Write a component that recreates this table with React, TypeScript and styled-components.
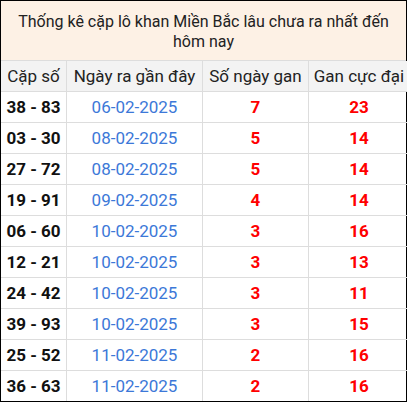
import React from "react";
import styled, { createGlobalStyle } from "styled-components";

const Global = createGlobalStyle`
  html, body { margin: 0; padding: 0; background: #fff; }
  body { font-family: Roboto, "Noto Sans", Arial, sans-serif; }
`;

const Wrap = styled.div`
  width: 407px;
  box-sizing: border-box;
  border: 1px solid #000;
  background: #fff;
`;

const Title = styled.div`
  background: #fdf1e5;
  color: #222;
  font-size: 16px;
  line-height: 20px;
  text-align: center;
  padding: 11px 10px 9px;
  border-bottom: 1px solid #ddd;
  height: 60px;
  box-sizing: border-box;
`;

const Table = styled.table`
  width: 100%;
  border-collapse: collapse;
  table-layout: fixed;
`;

const Th = styled.th<{ $w: number }>`
  width: ${(p) => p.$w}px;
  height: 30px;
  padding: 0;
  background: #f3f3f3;
  color: #222;
  font-weight: 400;
  font-size: 17px;
  text-align: center;
  border: 1px solid #ddd;
  border-top: none;
  &:first-child { border-left: none; }
  &:last-child { border-right: none; }
`;

type Kind = "pair" | "date" | "num";

const Td = styled.td<{ $kind: Kind }>`
  height: 30px;
  padding: 0;
  text-align: center;
  font-size: 17px;
  border: 1px solid #ddd;
  &:first-child { border-left: none; }
  &:last-child { border-right: none; }
  font-weight: ${(p) => (p.$kind === "date" ? 400 : 700)};
  color: ${(p) =>
    p.$kind === "pair" ? "#111" : p.$kind === "date" ? "#3c78d8" : "#f00"};
`;

const Tr = styled.tr`
  &:last-child td { border-bottom: none; }
`;

const rows: [string, string, string, string][] = [
  ["38 - 83", "06-02-2025", "7", "23"],
  ["03 - 30", "08-02-2025", "5", "14"],
  ["27 - 72", "08-02-2025", "5", "14"],
  ["19 - 91", "09-02-2025", "4", "14"],
  ["06 - 60", "10-02-2025", "3", "16"],
  ["12 - 21", "10-02-2025", "3", "13"],
  ["24 - 42", "10-02-2025", "3", "11"],
  ["39 - 93", "10-02-2025", "3", "15"],
  ["25 - 52", "11-02-2025", "2", "16"],
  ["36 - 63", "11-02-2025", "2", "16"],
];

export default function App() {
  return (
    <>
      <Global />
      <Wrap>
        <Title>Thống kê cặp lô khan Miền Bắc lâu chưa ra nhất đến hôm nay</Title>
        <Table>
          <thead>
            <tr>
              <Th $w={65}>Cặp số</Th>
              <Th $w={135}>Ngày ra gần đây</Th>
              <Th $w={105}>Số ngày gan</Th>
              <Th $w={100}>Gan cực đại</Th>
            </tr>
          </thead>
          <tbody>
            {rows.map((r) => (
              <Tr key={r[0]}>
                <Td $kind="pair">{r[0]}</Td>
                <Td $kind="date">{r[1]}</Td>
                <Td $kind="num">{r[2]}</Td>
                <Td $kind="num">{r[3]}</Td>
              </Tr>
            ))}
          </tbody>
        </Table>
      </Wrap>
    </>
  );
}
